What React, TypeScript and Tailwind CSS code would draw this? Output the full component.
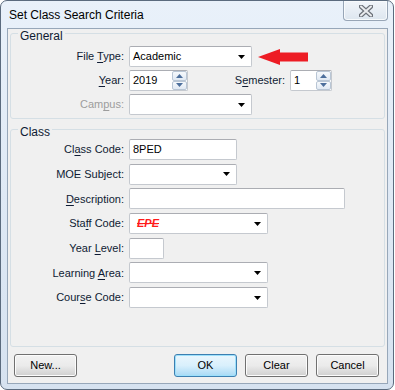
import React from "react";

const labelCls = "w-[113px] shrink-0 text-right text-[#0f1b33]";

function U({ children }: { children: React.ReactNode }) {
  return <span className="underline underline-offset-2">{children}</span>;
}

function Arrow() {
  return (
    <svg width="7" height="4" viewBox="0 0 7 4" className="shrink-0">
      <path d="M0 0h7L3.5 4z" fill="#000" />
    </svg>
  );
}

function TextBox({ w, value }: { w: string; value?: string }) {
  return (
    <div
      className={`${w} h-[21px] flex items-center px-[3px] bg-white border border-[#c5c9cf] border-t-[#abadb3] rounded-[2px] text-black`}
    >
      {value}
    </div>
  );
}

function Combo({ w, children }: { w: string; children?: React.ReactNode }) {
  return (
    <div
      className={`${w} h-[21px] flex items-center justify-between pl-[3px] pr-[6px] bg-white border border-[#c5c9cf] border-t-[#abadb3] rounded-[2px] text-black`}
    >
      <span>{children}</span>
      <Arrow />
    </div>
  );
}

function SpinBtn({ up }: { up?: boolean }) {
  return (
    <div className="flex-1 flex items-center justify-center border border-[#b9c6d5] rounded-[2px] bg-gradient-to-b from-[#f6f9fc] to-[#e1e9f3]">
      <svg width="7" height="4" viewBox="0 0 7 4">
        <path d={up ? "M0 4h7L3.5 0z" : "M0 0h7L3.5 4z"} fill="#4d6f9c" />
      </svg>
    </div>
  );
}

function Spin({ w, value }: { w: string; value: string }) {
  return (
    <div
      className={`${w} h-[21px] flex bg-white border border-[#c5c9cf] border-t-[#abadb3] rounded-[2px] text-black`}
    >
      <div className="flex-1 flex items-center px-[3px]">{value}</div>
      <div className="w-[15px] flex flex-col">
        <SpinBtn up />
        <SpinBtn />
      </div>
    </div>
  );
}

function Group({
  title,
  className,
  children,
}: {
  title: string;
  className: string;
  children: React.ReactNode;
}) {
  return (
    <div
      className={`relative mx-[2px] border border-[#d5dfe5] rounded-[3px] ${className}`}
    >
      <span className="absolute left-[7px] -top-[3px] px-[2px] bg-[#f0f0f0] leading-[11px] text-[12px] text-[#0f1b33]">
        {title}
      </span>
      {children}
    </div>
  );
}

function Row({ children }: { children: React.ReactNode }) {
  return <div className="flex items-center gap-[5px]">{children}</div>;
}

function Button({
  children,
  def,
}: {
  children: React.ReactNode;
  def?: boolean;
}) {
  return (
    <div
      className={
        def
          ? "w-[63px] h-[23px] flex items-center justify-center rounded-[3px] border border-[#3c7fb1] bg-gradient-to-b from-[#eaf6fd] via-[#d9f0fc] to-[#a7d9f5] shadow-[inset_0_0_0_1px_#9de0fb] text-black"
          : "w-[63px] h-[23px] flex items-center justify-center rounded-[3px] border border-[#707070] bg-gradient-to-b from-[#f2f2f2] via-[#ebebeb] to-[#cfcfcf] shadow-[inset_0_0_0_1px_#fcfcfc] text-black"
      }
    >
      {children}
    </div>
  );
}

export default function App() {
  return (
    <div className="w-[395px] h-[390px] bg-white font-['Liberation_Sans',Arial,sans-serif] text-[11px]">
      <div className="w-[394px] h-[390px] border border-[#5b6b7e] rounded-[7px] bg-gradient-to-b from-[#e9f1fa] via-[#dfe9f5] to-[#d6e2f0] flex flex-col">
        {/* title bar */}
        <div className="h-[27px] flex items-start justify-between">
          <span className="pl-[8px] pt-[7px] text-[12px] text-black leading-[14px]">
            Set Class Search Criteria
          </span>
          <div className="mr-[5px] w-[45px] h-[20px] flex items-center justify-center border border-t-0 border-[#97a5b6] rounded-b-[4px] bg-gradient-to-b from-[#f1f5fa] to-[#dde6ef] shadow-[inset_0_0_0_1px_#f7fafc]">
            <svg width="14" height="12" viewBox="0 0 14 12">
              <path
                d="M2 1.5l10 9M12 1.5l-10 9"
                stroke="#6b7078"
                strokeWidth="4.4"
                strokeLinecap="round"
              />
              <path
                d="M2 1.5l10 9M12 1.5l-10 9"
                stroke="#e9ebee"
                strokeWidth="2"
                strokeLinecap="round"
              />
            </svg>
          </div>
        </div>

        {/* client area */}
        <div className="ml-[6px] w-[381px] h-[356px] border border-[#97a7b9] bg-[#f0f0f0] flex flex-col">
          <Group title="General" className="mt-[4px] pt-[12px] pb-[3px]">
            <div className="flex flex-col gap-[3px]">
              <Row>
                <span className={labelCls}>
                  File <U>T</U>ype:
                </span>
                <Combo w="w-[123px]">Academic</Combo>
                <svg width="50" height="16" viewBox="0 0 50 16" className="ml-[1px]">
                  <path d="M0 8L22 0v3.5h28v9H22V16z" fill="#ed1c24" />
                </svg>
              </Row>
              <Row>
                <span className={labelCls}>
                  <U>Y</U>ear:
                </span>
                <Spin w="w-[59px]" value="2019" />
                <span className="w-[92px] text-right text-[#0f1b33]">
                  S<U>e</U>mester:
                </span>
                <Spin w="w-[42px]" value="1" />
              </Row>
              <Row>
                <span className={`${labelCls} !text-[#9d9d9d]`}>
                  Cam<U>p</U>us:
                </span>
                <Combo w="w-[123px]" />
              </Row>
            </div>
          </Group>

          <Group title="Class" className="mt-[10px] pt-[9px] pb-[38px]">
            <div className="flex flex-col gap-[3.7px]">
              <Row>
                <span className={labelCls}>
                  Cl<U>a</U>ss Code:
                </span>
                <TextBox w="w-[108px]" value="8PED" />
              </Row>
              <Row>
                <span className={labelCls}>MOE Subject:</span>
                <Combo w="w-[108px]" />
              </Row>
              <Row>
                <span className={labelCls}>
                  <U>D</U>escription:
                </span>
                <TextBox w="w-[216px]" />
              </Row>
              <Row>
                <span className={labelCls}>
                  Sta<U>f</U>f Code:
                </span>
                <Combo w="w-[139px]">
                  <span className="ml-[4px] italic font-bold text-[#ff1a1a] line-through">
                    EPE
                  </span>
                </Combo>
              </Row>
              <Row>
                <span className={labelCls}>
                  Year <U>L</U>evel:
                </span>
                <TextBox w="w-[35px]" />
              </Row>
              <Row>
                <span className={labelCls}>
                  Learning <U>A</U>rea:
                </span>
                <Combo w="w-[139px]" />
              </Row>
              <Row>
                <span className={labelCls}>
                  Cour<U>s</U>e Code:
                </span>
                <Combo w="w-[139px]" />
              </Row>
            </div>
          </Group>

          <div className="mt-[7px] pl-[6px] pr-[8px] flex items-center">
            <Button>New...</Button>
            <div className="ml-auto flex gap-[8px]">
              <Button def>OK</Button>
              <Button>Clear</Button>
              <Button>Cancel</Button>
            </div>
          </div>
        </div>
      </div>
    </div>
  );
}
